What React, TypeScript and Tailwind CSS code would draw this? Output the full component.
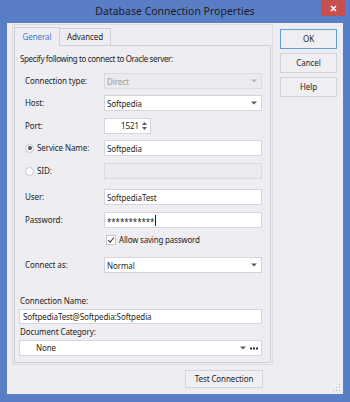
import { ReactNode } from "react";

function Arrow({ disabled = false }: { disabled?: boolean }) {
    return (
        <svg width="6" height="4" viewBox="0 0 6 4" className="shrink-0">
            <path d="M0 0.5 H6 L3 3.5 Z" fill={disabled ? "#b4b4bc" : "#5a5a62"} />
        </svg>
    );
}

function Field({ children, disabled = false, combo = false, className = "" }: { children?: ReactNode; disabled?: boolean; combo?: boolean; className?: string }) {
    return (
        <div
            className={`h-[16px] w-[158px] border flex items-center pl-[2px] pr-[4px] ${disabled ? "bg-[#eaeaef] border-[#dadae1] text-[#9a9aa2]" : "bg-white border-[#d4d4dc]"} ${className}`}
        >
            <span className="flex-1 leading-[13px] whitespace-nowrap overflow-hidden">{children}</span>
            {combo && <Arrow disabled={disabled} />}
        </div>
    );
}

function Row({ label, children, top, radio }: { label: string; children: ReactNode; top: string; radio?: "on" | "off" }) {
    return (
        <div className={`flex items-center pl-[10px] ${top}`}>
            <div className="w-[79px] flex items-center">
                {radio && (
                    <span className="w-[9px] h-[9px] rounded-full border border-[#c4c4cc] bg-white flex items-center justify-center mr-[3px]">
                        {radio === "on" && <span className="w-[4px] h-[4px] rounded-full bg-[#55555c]" />}
                    </span>
                )}
                <span>{label}</span>
            </div>
            {children}
        </div>
    );
}

function Button({ children, className = "" }: { children: ReactNode; className?: string }) {
    return (
        <div className={`h-[20px] w-[57px] border bg-[#efeff3] flex items-center justify-center ${className}`}>
            {children}
        </div>
    );
}

export default function App() {
    return (
        <div className="w-[350px] h-[402px] bg-[#5a7ec6] flex flex-col font-['Noto_Sans',sans-serif] text-[8px] leading-none tracking-[-0.1px] text-[#1f1f23]">
            {/* title bar */}
            <div className="h-[23px] relative flex items-center justify-center">
                <span className="text-[10.5px] tracking-normal text-[#1c1c24] -mt-[1px]">Database Connection Properties</span>
                <div className="absolute right-[5px] top-0 w-[24px] h-[16px] bg-[#c75050] flex items-center justify-center">
                    <svg width="7" height="7" viewBox="0 0 7 7">
                        <path d="M1 1 L6 6 M6 1 L1 6" stroke="white" strokeWidth="1.5" />
                    </svg>
                </div>
            </div>

            {/* client area */}
            <div className="mx-[7px] mb-[8px] flex-1 bg-[#eeedf2] flex flex-col relative">
                <div className="flex items-start">
                    <div className="ml-[5px] mt-[1px] w-[261px] h-[341px] border border-[#dcdce3] px-[1px] pb-[1px] pt-[2px] flex flex-col">
                        {/* tabs */}
                        <div className="flex items-end h-[18px]">
                            <div className="w-[46px] h-[19px] border border-b-0 border-[#cfcfd8] bg-[#eeedf2] text-[#3a7bcf] flex items-center justify-center -mb-[1px] relative">
                                General
                            </div>
                            <div className="w-[51px] h-[17px] border-t border-r border-[#cfcfd8] flex items-center justify-center">
                                Advanced
                            </div>
                        </div>
                        {/* sheet */}
                        <div className="flex-1 border border-[#cfcfd8] flex flex-col">
                            <div className="mt-[6px] ml-[5px] h-[14px] flex items-center tracking-[-0.35px]">Specify following to connect to Oracle server:</div>

                            <Row label="Connection type:" top="mt-[7px]">
                                <Field disabled combo>Direct</Field>
                            </Row>
                            <Row label="Host:" top="mt-[6px]">
                                <Field combo>Softpedia</Field>
                            </Row>
                            <Row label="Port:" top="mt-[7px]">
                                <div className="h-[16px] w-[47px] border border-[#d4d4dc] bg-white flex items-center justify-end pr-[3px] gap-[3px]">
                                    <span>1521</span>
                                    <svg width="5" height="10" viewBox="0 0 5 10">
                                        <path d="M0 4 L2.5 1 L5 4 Z" fill="#5a5a62" />
                                        <path d="M0 6 L2.5 9 L5 6 Z" fill="#5a5a62" />
                                    </svg>
                                </div>
                            </Row>
                            <Row label="Service Name:" top="mt-[6px]" radio="on">
                                <Field>Softpedia</Field>
                            </Row>
                            <Row label="SID:" top="mt-[7px]" radio="off">
                                <Field disabled />
                            </Row>
                            <Row label="User:" top="mt-[10px]">
                                <Field>SoftpediaTest</Field>
                            </Row>
                            <Row label="Password:" top="mt-[7px]">
                                <Field>
                                    <span className="flex items-center">
                                        <span className="mt-[2px]">***********</span>
                                        <span className="w-[1px] h-[11px] bg-[#1f1f23] ml-[1px]" />
                                    </span>
                                </Field>
                            </Row>
                            <div className="mt-[6px] ml-[91px] h-[12px] flex items-center gap-[3px]">
                                <span className="w-[10px] h-[10px] border border-[#c4c4cc] bg-white flex items-center justify-center">
                                    <svg width="8" height="8" viewBox="0 0 8 8">
                                        <path d="M1.2 4.2 L3.2 6.2 L6.8 1.5" stroke="#3c3c44" strokeWidth="1.1" fill="none" />
                                    </svg>
                                </span>
                                <span className="tracking-[-0.2px]">Allow saving password</span>
                            </div>
                            <Row label="Connect as:" top="mt-[11px]">
                                <Field combo>Normal</Field>
                            </Row>

                            <div className="mt-[21px] ml-[5px] h-[14px] flex items-center">Connection Name:</div>
                            <div className="mt-[1px] ml-[4px] h-[15px] w-[243px] border border-[#d4d4dc] bg-white flex items-center pl-[3px]">
                                SoftpediaTest@Softpedia:Softpedia
                            </div>
                            <div className="mt-[1px] ml-[5px] h-[14px] flex items-center">Document Category:</div>
                            <div className="mt-[1px] ml-[4px] h-[16px] w-[243px] border border-[#d4d4dc] bg-white flex items-center pl-[16px] pr-[3px]">
                                <span className="flex-1">None</span>
                                <Arrow />
                                <svg width="8" height="3" viewBox="0 0 8 3" className="ml-[4px]">
                                    <rect x="0" y="0.5" width="2" height="2" fill="#2c2c34" />
                                    <rect x="3" y="0.5" width="2" height="2" fill="#2c2c34" />
                                    <rect x="6" y="0.5" width="2" height="2" fill="#2c2c34" />
                                </svg>
                            </div>
                        </div>
                    </div>

                    {/* dialog buttons */}
                    <div className="ml-[7px] mt-[6px] flex flex-col gap-[4px]">
                        <Button className="border-[#5c9fe2]">OK</Button>
                        <Button className="border-[#d3d3db]">Cancel</Button>
                        <Button className="border-[#d3d3db]">Help</Button>
                    </div>
                </div>

                <div className="mt-[5px] ml-[178px] w-[78px] h-[18px] border border-[#d3d3db] bg-[#efeff3] flex items-center justify-center">
                    Test Connection
                </div>

                {/* size grip */}
                <svg width="8" height="8" viewBox="0 0 8 8" className="absolute right-[2px] bottom-[2px]">
                    <rect x="6" y="0" width="1" height="1" fill="#b8b8c0" />
                    <rect x="3" y="3" width="1" height="1" fill="#b8b8c0" />
                    <rect x="6" y="3" width="1" height="1" fill="#b8b8c0" />
                    <rect x="0" y="6" width="1" height="1" fill="#b8b8c0" />
                    <rect x="3" y="6" width="1" height="1" fill="#b8b8c0" />
                    <rect x="6" y="6" width="1" height="1" fill="#b8b8c0" />
                </svg>
            </div>
        </div>
    );
}
